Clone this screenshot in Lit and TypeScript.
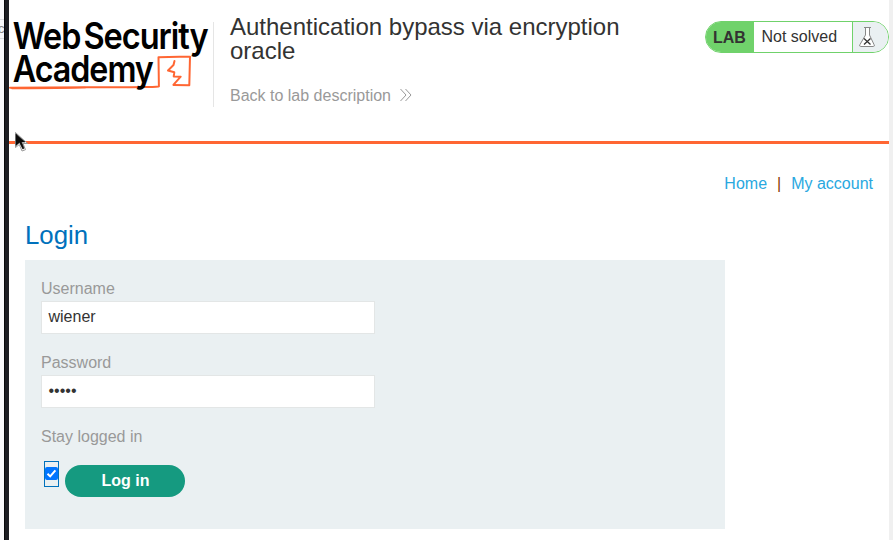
import { LitElement, html, css } from "lit";
import { customElement } from "lit/decorators.js";

@customElement("academy-logo")
class AcademyLogo extends LitElement {
  static styles = css`
    :host { display: block; width: 204px; height: 80px; }
    svg { display: block; overflow: visible; }
    text { font-family: Inter, "Open Sans", sans-serif; font-weight: 600; font-size: 37px; letter-spacing: -1.200px; fill: #000; }
    path { fill: none; stroke: #ff6633; stroke-linecap: round; stroke-linejoin: round; }
  `;
  render() {
    return html`<svg width="204" height="80" viewBox="9 16 204 80">
      <path stroke-width="2" d="M10 87.700Q60 87 110 87.200T158.900 86.300L158.500 57.300Q174 56.300 190 56.800L189.300 85.300L173.600 85"/>
      <path stroke-width="1.700" d="M12 88.300Q45 88.700 85 87.500"/>
      <path stroke-width="2" d="M174.500 61L173.500 65L168 70.500L174.300 72.300L173.700 76.500L180.700 76.700L173.600 84.700"/>
      <text x="12.800" y="49.300" textLength="67.500" lengthAdjust="spacingAndGlyphs">Web</text>
      <text x="83.500" y="49.300" textLength="124" lengthAdjust="spacingAndGlyphs">Security</text>
      <text x="12.800" y="82.300" textLength="140" lengthAdjust="spacingAndGlyphs">Academy</text>
    </svg>`;
  }
}

@customElement("lab-status")
class LabStatus extends LitElement {
  static styles = css`
    :host { display: flex; box-sizing: border-box; width: 184px; height: 32px; border: 1px solid #70d26b; border-radius: 16px; overflow: hidden; font-size: 16px; line-height: 30px; background: #fff; color: #333332; }
    .tag { box-sizing: border-box; width: 48px; padding-left: 7px; padding-top: 1px; background: #70d26b; font-weight: 700; }
    .state { flex: 1; padding-left: 7.500px; }
    .flask { box-sizing: border-box; width: 36px; border-left: 1px solid #70d26b; background: #eaf0f2; }
    svg { display: block; margin: 3px 0 0 5px; }
  `;
  render() {
    return html`<span class="tag">LAB</span><span class="state">Not solved</span>
      <span class="flask"><svg width="20" height="24" viewBox="0 0 20 24">
        <path d="M7.500 2.500V10L2 19.500Q1 21.500 2.500 21.500H15.500Q17 21.500 16 19.500L11.500 10V2.500Z" fill="#fff" stroke="#888"/>
        <path d="M6 2.500H13" stroke="#888"/>
        <path d="M6 13.500L12.500 19.500M12.500 13.500L6 19.500" stroke="#333" stroke-width="1.300"/>
      </svg></span>`;
  }
}

@customElement("app-root")
class AppRoot extends LitElement {
  static styles = css`
    :host { display: grid; grid-template-columns: 4px 5px 880px 4px; height: 540px; position: relative; overflow: hidden; background: #fff; font-family: "Liberation Sans", Arial, sans-serif; font-size: 16px; color: #333332; }
    .behind { background: #f8f9fc; overflow: hidden; padding-top: 19px; }
    .sliver { border: solid #dadce0; border-width: 1px 0; height: 18px; font-size: 13px; line-height: 18px; color: #888; }
    .sliver span { display: block; margin-left: -2px; }
    .frame { background: #1b1d23; border-left: 1px solid #08090c; box-sizing: border-box; }
    .scroll { background: #f0f0f0; }
    header { display: flex; height: 141px; border-bottom: 3px solid #ff6633; }
    academy-logo { margin-top: 16px; }
    .title { box-sizing: border-box; width: 440px; height: 85px; margin-top: 22px; padding-left: 16px; border-left: 1px solid #e5e5e5; }
    h2 { margin: -7px 0 0; font-size: 24px; line-height: 24px; font-weight: 400; }
    .back { display: flex; align-items: center; gap: 8px; margin-top: 24px; line-height: 18px; color: #999; }
    .back svg { margin-top: -2px; }
    lab-status { margin: 21px 0 0 auto; }
    nav { display: flex; justify-content: flex-end; padding: 31px 16px 0; line-height: 18px; color: #29a8df; }
    nav i { font-style: normal; color: #873600; padding: 0 10px; }
    main { padding: 0 16px; }
    h1 { margin: 26px 0 9px; font-size: 25.800px; line-height: 32px; font-weight: 400; color: #0071bc; }
    form { box-sizing: border-box; width: 700px; height: 269px; padding: 20px 16px 0; background: #eaf0f2; }
    label { display: block; line-height: 18px; color: #999; }
    .field { box-sizing: border-box; width: 334px; height: 33px; margin: 3px 0 20px; padding: 0 6.500px; border: 1px solid #e3e6e6; background: #fff; line-height: 30px; }
    .actions { display: flex; align-items: flex-start; margin: 15px 0 0 3px; }
    .check { box-sizing: border-box; width: 15px; height: 26px; border: 1px solid #0071bc; padding-top: 5px; }
    .check svg { display: block; }
    .login { width: 120px; height: 32px; margin: 4px 0 0 6px; border-radius: 16px; background: #159a80; color: #fff; font-weight: 700; line-height: 32px; text-align: center; text-indent: 1px; }
    .pointer { position: absolute; left: 14px; top: 131px; }
  `;
  render() {
    return html`
      <div class="behind"><div class="sliver"><span>c</span></div></div>
      <div class="frame"></div>
      <div class="page">
        <header>
          <academy-logo></academy-logo>
          <div class="title">
            <h2>Authentication bypass via encryption oracle</h2>
            <div class="back">Back to lab description
              <svg width="14" height="14" viewBox="0 0 14 14" fill="none" stroke="#999"><path d="M1.500 1L7 7L1.500 13M6.500 1L12 7L6.500 13"/></svg>
            </div>
          </div>
          <lab-status></lab-status>
        </header>
        <nav><span>Home</span><i>|</i><span>My account</span></nav>
        <main>
          <h1>Login</h1>
          <form>
            <label>Username</label>
            <div class="field">wiener</div>
            <label>Password</label>
            <div class="field">•••••</div>
            <label>Stay logged in</label>
            <div class="actions">
              <span class="check"><svg width="13" height="13" viewBox="0 0 13 13"><rect width="13" height="13" rx="2" fill="#0075ff"/><path d="M2.500 6.700L5.200 9.400L10.400 3.400" fill="none" stroke="#fff" stroke-width="2"/></svg></span>
              <div class="login">Log in</div>
            </div>
          </form>
        </main>
      </div>
      <div class="scroll"></div>
      <svg class="pointer" width="18" height="24" viewBox="0 0 18 24">
        <path d="M1.500 1.500V16.500L5.300 13.500L8 20L11.500 18.700L9 12.500H13.500Z" fill="#fff" stroke="#999" stroke-width="1"/>
        <path d="M2 3V14.500L5.500 11.500L8.800 18L10 17.300L7.500 11H11Z" fill="#0a0a0a" stroke="#0a0a0a" stroke-width=".6"/>
      </svg>`;
  }
}
